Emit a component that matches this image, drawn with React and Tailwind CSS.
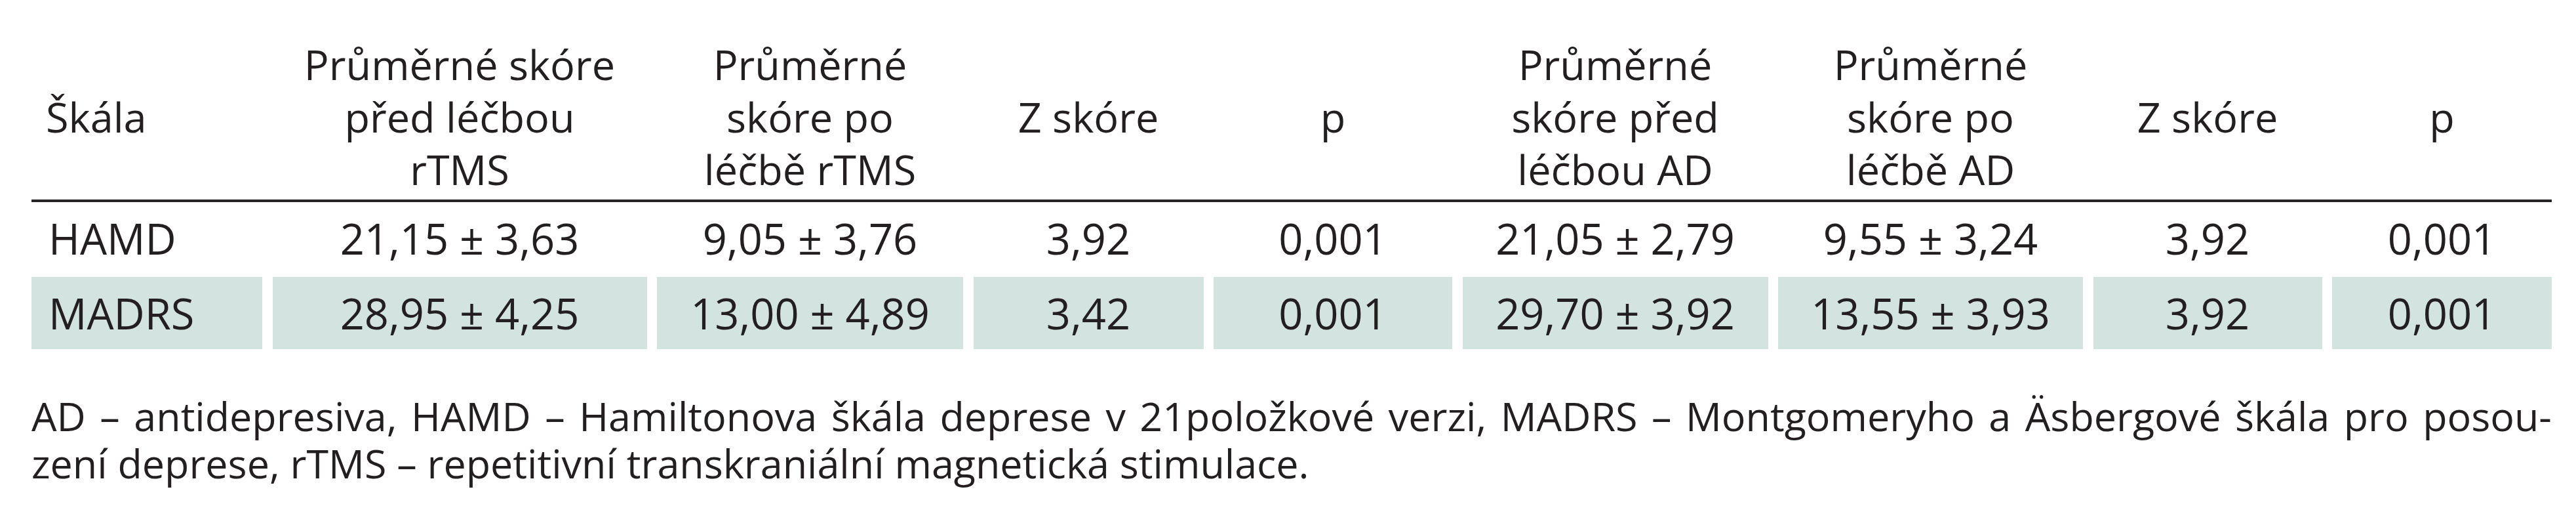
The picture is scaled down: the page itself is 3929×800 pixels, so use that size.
const cols = 'grid grid-cols-[352px_571px_467px_351px_364px_466px_465px_349px_335px] gap-x-[15.5px]'

const headers = [
  ['Škála'],
  ['Průměrné skóre', 'před léčbou', 'rTMS'],
  ['Průměrné', 'skóre po', 'léčbě rTMS'],
  ['Z skóre'],
  ['p'],
  ['Průměrné', 'skóre před', 'léčbou AD'],
  ['Průměrné', 'skóre po', 'léčbě AD'],
  ['Z skóre'],
  ['p'],
]

const rows = [
  { shaded: false, cells: ['HAMD', '21,15 ± 3,63', '9,05 ± 3,76', '3,92', '0,001', '21,05 ± 2,79', '9,55 ± 3,24', '3,92', '0,001'] },
  { shaded: true, cells: ['MADRS', '28,95 ± 4,25', '13,00 ± 4,89', '3,42', '0,001', '29,70 ± 3,92', '13,55 ± 3,93', '3,92', '0,001'] },
]

function HeaderRow() {
  return (
    <div className={`${cols} pt-[58px] pb-[6px] border-b-[4px] border-[#262324]`}>
      {headers.map((lines, i) => (
        <div
          key={i}
          className={`flex flex-col justify-center text-[63px] leading-[80px] ${i === 0 ? 'items-start pl-[22px]' : 'items-center text-center'}`}
        >
          {lines.map((l) => (
            <span key={l} className="whitespace-nowrap">{l}</span>
          ))}
        </div>
      ))}
    </div>
  )
}

function DataRow({ row, first }) {
  return (
    <div className={`${cols} ${first ? '' : 'mt-[4px]'}`}>
      {row.cells.map((c, i) => (
        <div
          key={i}
          className={`h-[110px] flex items-center text-[65px] leading-[80px] whitespace-nowrap ${row.shaded ? 'bg-[#d3e3df]' : ''} ${i === 0 ? 'justify-start pl-[26px]' : 'justify-center'}`}
        >
          {c}
        </div>
      ))}
    </div>
  )
}

export default function App() {
  return (
    <div className="w-[3929px] h-[800px] bg-white text-[#231f20] font-['Open_Sans',sans-serif] overflow-hidden">
      <div className="ml-[48px] w-[3844px]">
        <HeaderRow />
        {rows.map((r, i) => (
          <DataRow key={r.cells[0]} row={r} first={i === 0} />
        ))}
        <div className="mt-[66px] text-[61px] leading-[72px]">
          <div className="text-justify [text-align-last:justify]">
            AD – antidepresiva, HAMD – Hamiltonova škála deprese v 21položkové verzi, MADRS – Montgomeryho a Äsbergové škála pro posou-
          </div>
          <div className="whitespace-nowrap">
            zení deprese, rTMS – repetitivní transkraniální magnetická stimulace.
          </div>
        </div>
      </div>
    </div>
  )
}
